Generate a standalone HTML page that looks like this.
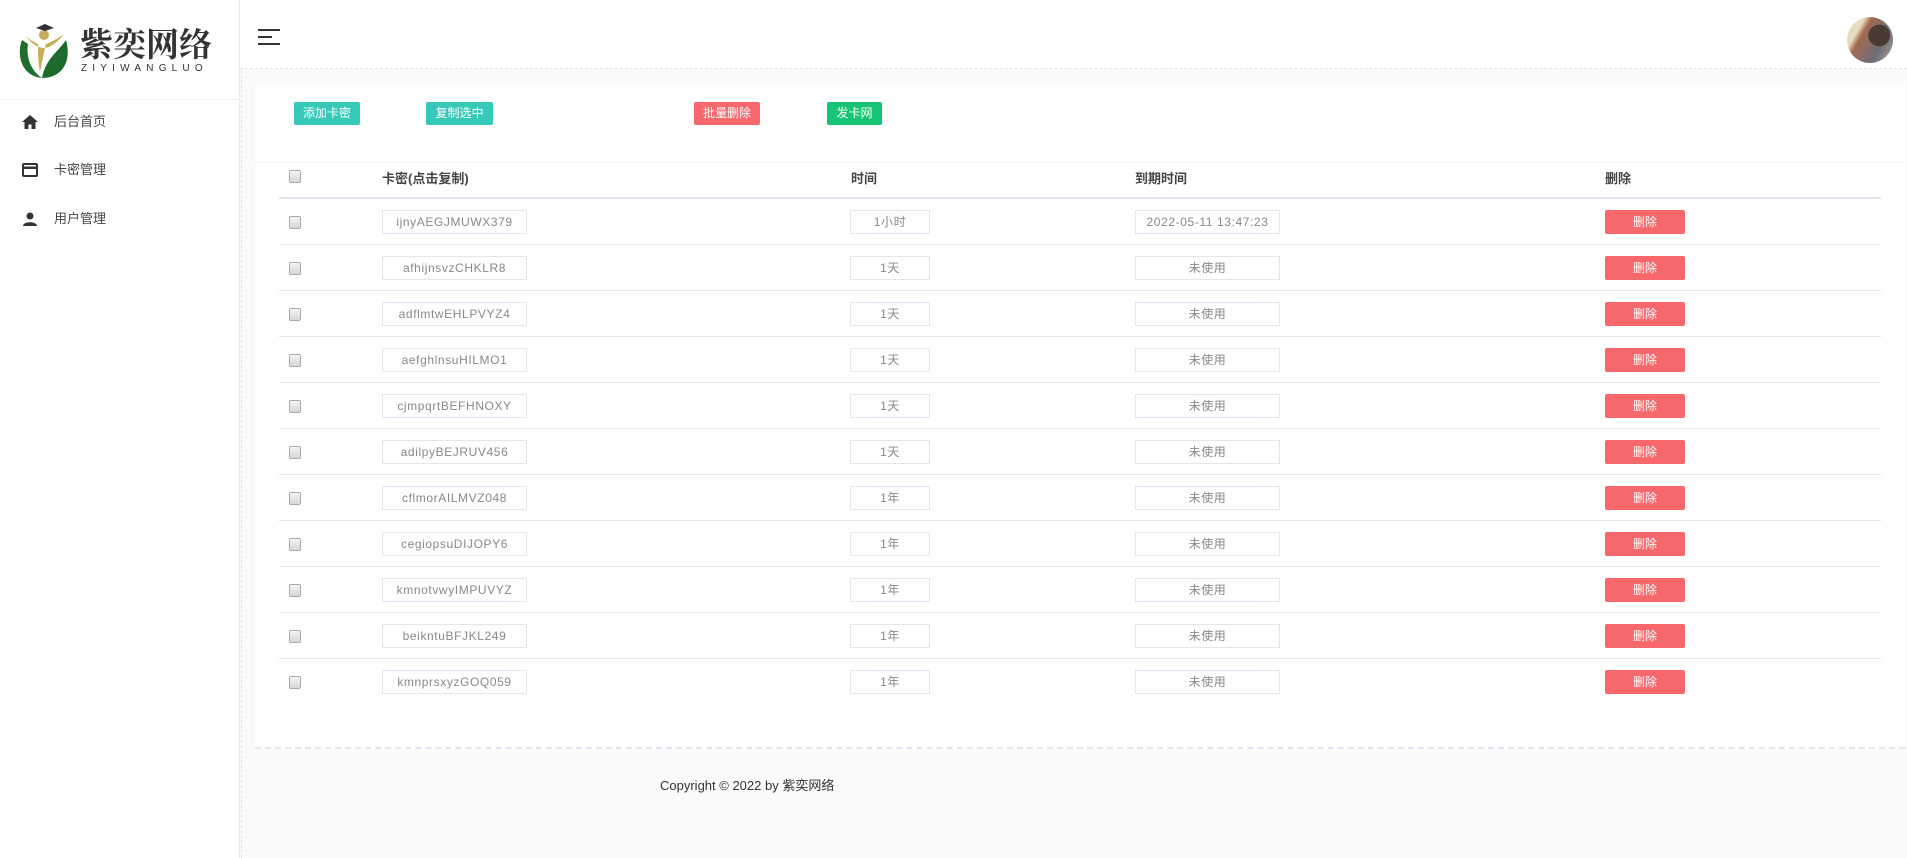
<!DOCTYPE html>
<html><head><meta charset="utf-8"><style>
*{margin:0;padding:0;box-sizing:border-box}
body{width:1907px;height:858px;overflow:hidden;background:#fafafa;font-family:"Liberation Sans","Noto Sans CJK SC",sans-serif;position:relative;color:#333}
.side{position:absolute;left:0;top:0;width:240px;height:858px;background:#fff;border-right:1px solid #e8eaf2}
.top{position:absolute;left:240px;top:0;right:0;height:69px;background:#fff;border-bottom:1px dashed #e0e4ee}
.menu{position:absolute;left:0;font-size:13px;color:#444;height:20px;line-height:20px}
.menu svg{position:absolute;left:22px;top:3px}
.menu span{position:absolute;left:54px;white-space:nowrap}
.card{position:absolute;left:255px;top:84px;width:1650px;height:665px;background:#fff;border-bottom:2px dashed #e2e6f0}
.btn{position:absolute;top:102px;height:23px;line-height:23px;color:#fff;font-size:12px;text-align:center;border-radius:2px}
.th{position:absolute;top:168px;font-size:13px;font-weight:bold;color:#444}
.row{position:absolute;left:279px;width:1602px;height:46px;border-bottom:1px solid #e4e7ef}
.cb{position:absolute;left:10px;top:17px;width:12px;height:13px;border:1px solid #aaa;border-radius:2px;background:linear-gradient(#f4f4f4,#d6d6d6)}
.box{position:absolute;top:11px;height:24px;line-height:22px;border:1px solid #e2e6ef;font-size:12px;color:#888;text-align:center;background:#fff;letter-spacing:.6px}
.del{position:absolute;left:1326px;top:11px;width:80px;height:24px;line-height:24px;background:#f6686b;color:#fff;font-size:12px;text-align:center;border-radius:2px}
</style></head><body>
<div class="side">
 <svg style="position:absolute;left:16px;top:22px" width="56" height="58" viewBox="0 0 56 58">
  <path d="M6 18 C0 34 6 54 26 56 C14 48 10 34 12 22Z" fill="#1e6e2e"/>
  <path d="M26 56 C46 56 56 40 50 18 C42 30 30 36 26 56Z" fill="#1a6b2c"/>
  <path d="M10 14 C16 22 22 26 28 26 C34 26 42 20 48 12 C40 18 34 20 30 22 C28 30 26 40 24 50 C22 40 22 30 22 22 C18 20 14 18 10 14Z" fill="#c7ac5a"/>
  <circle cx="28" cy="13" r="5" fill="#c7ac5a"/>
  <path d="M20 6 L29 2 L38 6 L29 9Z" fill="#333"/>
 </svg>
 <div style="position:absolute;left:80px;top:24px;font-size:33px;font-weight:bold;color:#333;font-family:'Noto Serif CJK SC','Noto Sans CJK SC',serif;line-height:38px">紫奕网络</div>
 <div style="position:absolute;left:81px;top:63px;font-size:10px;letter-spacing:5.2px;color:#333">ZIYIWANGLUO</div>
 <div style="position:absolute;left:0;top:99px;width:240px;border-top:1px solid #f0f0f3"></div>
 <div class="menu" style="top:112px"><svg width="16" height="14" viewBox="0 0 16 14"><path d="M8 0 L16 7 H13.5 V14 H9.5 V9.5 H6.5 V14 H2.5 V7 H0Z" fill="#333"/></svg><span>后台首页</span></div>
 <div class="menu" style="top:160px"><svg width="16" height="14" viewBox="0 0 16 14"><rect x="1" y="1" width="14" height="12" rx="1" fill="none" stroke="#333" stroke-width="2"/><rect x="1" y="3.5" width="14" height="2.5" fill="#333"/></svg><span>卡密管理</span></div>
 <div class="menu" style="top:209px"><svg width="16" height="14" viewBox="0 0 16 14"><circle cx="8" cy="4" r="3.5" fill="#333"/><path d="M1 14 C1 9 15 9 15 14Z" fill="#333"/></svg><span>用户管理</span></div>
</div>
<div class="top">
 <svg style="position:absolute;left:18px;top:29px" width="22" height="16"><rect y="0" width="22" height="2" fill="#333"/><rect y="7" width="14" height="2" fill="#333"/><rect y="14" width="22" height="2" fill="#333"/></svg>
 <div style="position:absolute;left:1607px;top:17px;width:46px;height:46px;border-radius:50%;background:radial-gradient(circle at 70% 40%,#4a3a34 0 25%,transparent 26%),linear-gradient(120deg,#e8dcc0 0 25%,#a36a52 35%,#6d6d78 70%,#b5a79a);"></div>
</div>
<div style="position:absolute;left:241px;top:70px;width:14px;height:788px;border-left:1px dashed #e0e4ee"></div>
<div class="card">
 <div style="position:absolute;left:0;top:78px;width:1650px;border-top:1px solid #f4f4f6"></div>
</div>
<div class="btn" style="left:294px;width:66px;background:#36c9b9">添加卡密</div>
<div class="btn" style="left:426px;width:67px;background:#36c9b9">复制选中</div>
<div class="btn" style="left:694px;width:66px;background:#f6686b">批量删除</div>
<div class="btn" style="left:827px;width:55px;background:#17c477">发卡网</div>
<div class="cb" style="position:absolute;left:289px;top:170px"></div>
<div class="th" style="left:382px">卡密(点击复制)</div>
<div class="th" style="left:851px">时间</div>
<div class="th" style="left:1135px">到期时间</div>
<div class="th" style="left:1605px">删除</div>
<div style="position:absolute;left:279px;top:197px;width:1602px;height:2px;background:#e1e5ef"></div>
<div style="position:absolute;left:660px;top:775px;font-size:13px;color:#333">Copyright © 2022 by 紫奕网络</div>
<div class="row" style="top:199px"><div class="cb"></div><div class="box" style="left:103px;width:145px">ijnyAEGJMUWX379</div><div class="box" style="left:571px;width:80px">1小时</div><div class="box" style="left:856px;width:145px">2022-05-11 13:47:23</div><div class="del">删除</div></div>
<div class="row" style="top:245px"><div class="cb"></div><div class="box" style="left:103px;width:145px">afhijnsvzCHKLR8</div><div class="box" style="left:571px;width:80px">1天</div><div class="box" style="left:856px;width:145px">未使用</div><div class="del">删除</div></div>
<div class="row" style="top:291px"><div class="cb"></div><div class="box" style="left:103px;width:145px">adflmtwEHLPVYZ4</div><div class="box" style="left:571px;width:80px">1天</div><div class="box" style="left:856px;width:145px">未使用</div><div class="del">删除</div></div>
<div class="row" style="top:337px"><div class="cb"></div><div class="box" style="left:103px;width:145px">aefghlnsuHILMO1</div><div class="box" style="left:571px;width:80px">1天</div><div class="box" style="left:856px;width:145px">未使用</div><div class="del">删除</div></div>
<div class="row" style="top:383px"><div class="cb"></div><div class="box" style="left:103px;width:145px">cjmpqrtBEFHNOXY</div><div class="box" style="left:571px;width:80px">1天</div><div class="box" style="left:856px;width:145px">未使用</div><div class="del">删除</div></div>
<div class="row" style="top:429px"><div class="cb"></div><div class="box" style="left:103px;width:145px">adilpyBEJRUV456</div><div class="box" style="left:571px;width:80px">1天</div><div class="box" style="left:856px;width:145px">未使用</div><div class="del">删除</div></div>
<div class="row" style="top:475px"><div class="cb"></div><div class="box" style="left:103px;width:145px">cflmorAILMVZ048</div><div class="box" style="left:571px;width:80px">1年</div><div class="box" style="left:856px;width:145px">未使用</div><div class="del">删除</div></div>
<div class="row" style="top:521px"><div class="cb"></div><div class="box" style="left:103px;width:145px">cegiopsuDIJOPY6</div><div class="box" style="left:571px;width:80px">1年</div><div class="box" style="left:856px;width:145px">未使用</div><div class="del">删除</div></div>
<div class="row" style="top:567px"><div class="cb"></div><div class="box" style="left:103px;width:145px">kmnotvwyIMPUVYZ</div><div class="box" style="left:571px;width:80px">1年</div><div class="box" style="left:856px;width:145px">未使用</div><div class="del">删除</div></div>
<div class="row" style="top:613px"><div class="cb"></div><div class="box" style="left:103px;width:145px">beikntuBFJKL249</div><div class="box" style="left:571px;width:80px">1年</div><div class="box" style="left:856px;width:145px">未使用</div><div class="del">删除</div></div>
<div class="row" style="top:659px;border-bottom:none"><div class="cb"></div><div class="box" style="left:103px;width:145px">kmnprsxyzGOQ059</div><div class="box" style="left:571px;width:80px">1年</div><div class="box" style="left:856px;width:145px">未使用</div><div class="del">删除</div></div>
</body></html>
